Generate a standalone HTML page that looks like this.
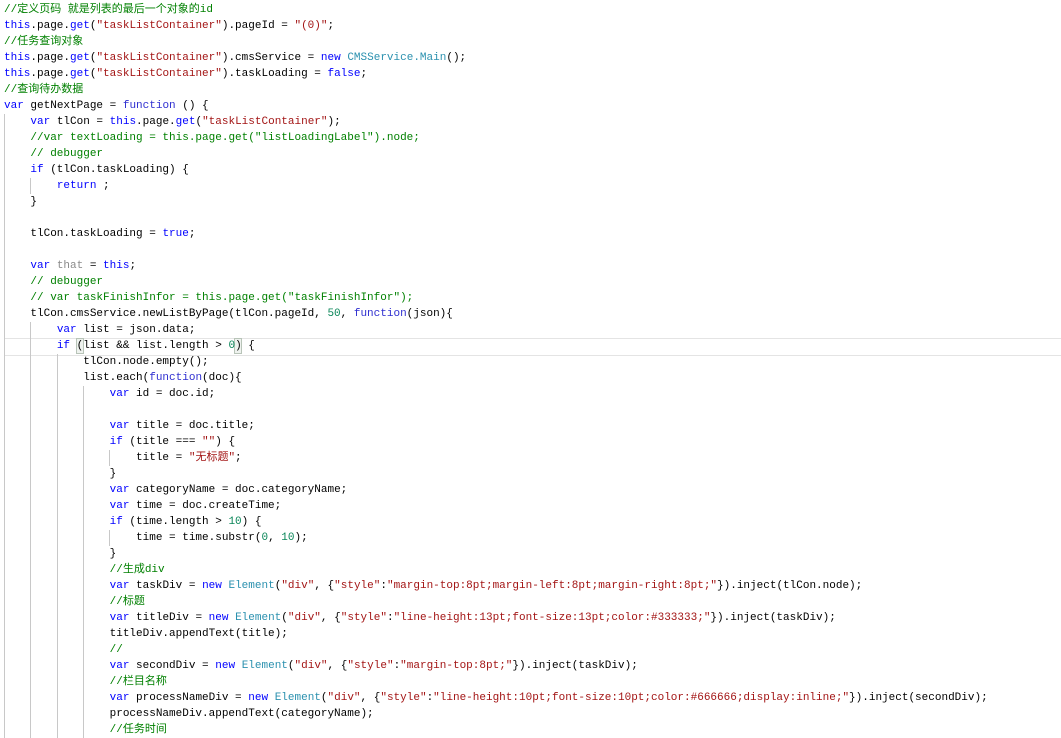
<!DOCTYPE html>
<html><head><meta charset="utf-8"><style>
body{margin:0;background:#fff;width:1061px;height:738px;overflow:hidden;position:relative}
#code{position:absolute;left:4px;top:2px;font-family:"Liberation Mono","Noto Sans CJK SC",monospace;font-size:11px;color:#000}
.l{height:16px;line-height:16px;white-space:pre}
.k{color:#0000ff}.f{color:#2f2fd0}.s{color:#a31515}.c{color:#008000}.t{color:#2b91af}.n{color:#098658}.g{color:#8a8a8a}
.cj{font-size:12px}
.gd{position:absolute;width:1px;background:#c8c8c8}
.hl{position:absolute;left:4px;right:0;top:338px;height:16px;border-top:1px solid #e4e4e4;border-bottom:1px solid #e4e4e4}
.bb{position:absolute;width:8px;height:16px;border:1px solid #b8c4b8;background:#eef2ee;box-sizing:border-box}
</style></head><body>
<div class="hl"></div>
<div class="bb" style="left:76px;top:338px"></div>
<div class="bb" style="left:234px;top:338px"></div>
<div class="gd" style="left:4px;top:114px;height:624px"></div>
<div class="gd" style="left:30px;top:178px;height:16px"></div>
<div class="gd" style="left:30px;top:322px;height:416px"></div>
<div class="gd" style="left:57px;top:354px;height:384px"></div>
<div class="gd" style="left:83px;top:386px;height:352px"></div>
<div class="gd" style="left:109px;top:450px;height:16px"></div>
<div class="gd" style="left:109px;top:530px;height:16px"></div>
<div id="code">
<div class="l"><span class="c">//定义页码 就是列表的最后一个对象的id</span></div>
<div class="l"><span class="k">this</span>.page.<span class="k">get</span>(<span class="s">"taskListContainer"</span>).pageId = <span class="s">"(0)"</span>;</div>
<div class="l"><span class="c">//任务查询对象</span></div>
<div class="l"><span class="k">this</span>.page.<span class="k">get</span>(<span class="s">"taskListContainer"</span>).cmsService = <span class="k">new</span> <span class="t">CMSService.Main</span>();</div>
<div class="l"><span class="k">this</span>.page.<span class="k">get</span>(<span class="s">"taskListContainer"</span>).taskLoading = <span class="k">false</span>;</div>
<div class="l"><span class="c">//查询待办数据</span></div>
<div class="l"><span class="k">var</span> getNextPage = <span class="f">function</span> () {</div>
<div class="l">    <span class="k">var</span> tlCon = <span class="k">this</span>.page.<span class="k">get</span>(<span class="s">"taskListContainer"</span>);</div>
<div class="l">    <span class="c">//var textLoading = this.page.get("listLoadingLabel").node;</span></div>
<div class="l">    <span class="c">// debugger</span></div>
<div class="l">    <span class="k">if</span> (tlCon.taskLoading) {</div>
<div class="l">        <span class="k">return</span> ;</div>
<div class="l">    }</div>
<div class="l"> </div>
<div class="l">    tlCon.taskLoading = <span class="k">true</span>;</div>
<div class="l"> </div>
<div class="l">    <span class="k">var</span> <span class="g">that</span> = <span class="k">this</span>;</div>
<div class="l">    <span class="c">// debugger</span></div>
<div class="l">    <span class="c">// var taskFinishInfor = this.page.get("taskFinishInfor");</span></div>
<div class="l">    tlCon.cmsService.newListByPage(tlCon.pageId, <span class="n">50</span>, <span class="f">function</span>(json){</div>
<div class="l">        <span class="k">var</span> list = json.data;</div>
<div class="l">        <span class="k">if</span> (list &amp;&amp; list.length &gt; <span class="n">0</span>) {</div>
<div class="l">            tlCon.node.empty();</div>
<div class="l">            list.each(<span class="f">function</span>(doc){</div>
<div class="l">                <span class="k">var</span> id = doc.id;</div>
<div class="l"> </div>
<div class="l">                <span class="k">var</span> title = doc.title;</div>
<div class="l">                <span class="k">if</span> (title === <span class="s">""</span>) {</div>
<div class="l">                    title = <span class="s">"无标题"</span>;</div>
<div class="l">                }</div>
<div class="l">                <span class="k">var</span> categoryName = doc.categoryName;</div>
<div class="l">                <span class="k">var</span> time = doc.createTime;</div>
<div class="l">                <span class="k">if</span> (time.length &gt; <span class="n">10</span>) {</div>
<div class="l">                    time = time.substr(<span class="n">0</span>, <span class="n">10</span>);</div>
<div class="l">                }</div>
<div class="l">                <span class="c">//生成div</span></div>
<div class="l">                <span class="k">var</span> taskDiv = <span class="k">new</span> <span class="t">Element</span>(<span class="s">"div"</span>, {<span class="s">"style"</span>:<span class="s">"margin-top:8pt;margin-left:8pt;margin-right:8pt;"</span>}).inject(tlCon.node);</div>
<div class="l">                <span class="c">//标题</span></div>
<div class="l">                <span class="k">var</span> titleDiv = <span class="k">new</span> <span class="t">Element</span>(<span class="s">"div"</span>, {<span class="s">"style"</span>:<span class="s">"line-height:13pt;font-size:13pt;color:#333333;"</span>}).inject(taskDiv);</div>
<div class="l">                titleDiv.appendText(title);</div>
<div class="l">                <span class="c">//</span></div>
<div class="l">                <span class="k">var</span> secondDiv = <span class="k">new</span> <span class="t">Element</span>(<span class="s">"div"</span>, {<span class="s">"style"</span>:<span class="s">"margin-top:8pt;"</span>}).inject(taskDiv);</div>
<div class="l">                <span class="c">//栏目名称</span></div>
<div class="l">                <span class="k">var</span> processNameDiv = <span class="k">new</span> <span class="t">Element</span>(<span class="s">"div"</span>, {<span class="s">"style"</span>:<span class="s">"line-height:10pt;font-size:10pt;color:#666666;display:inline;"</span>}).inject(secondDiv);</div>
<div class="l">                processNameDiv.appendText(categoryName);</div>
<div class="l">                <span class="c">//任务时间</span></div>
</div>
</body></html>
